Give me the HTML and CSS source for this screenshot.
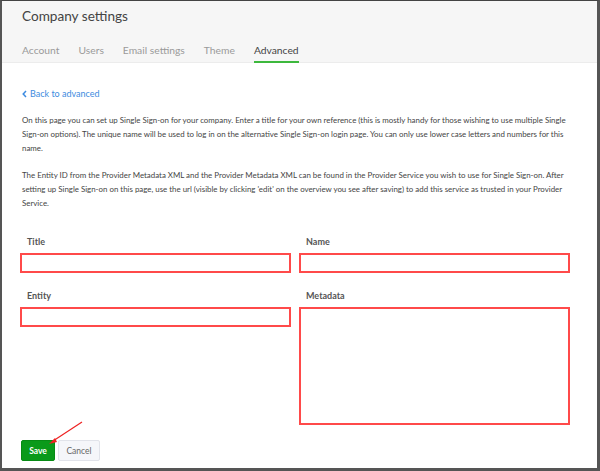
FILE: index.html
```html
<!DOCTYPE html>
<html>
<head>
<meta charset="utf-8">
<link rel="stylesheet" href="styles.css">
</head>
<body>
<div class="frame">
  <header class="header">
    <h1 class="title">Company settings</h1>
    <nav class="tabs">
      <span class="tab">Account</span>
      <span class="tab">Users</span>
      <span class="tab">Email settings</span>
      <span class="tab">Theme</span>
      <span class="tab active">Advanced</span>
    </nav>
  </header>
  <main class="content">
    <a class="back"><svg class="chev" width="5" height="8" viewBox="0 0 5 8"><path d="M4 1 L1.2 4 L4 7" fill="none" stroke="#3d8be0" stroke-width="1.5"/></svg>Back to advanced</a>
    <p class="text">On this page you can set up Single Sign-on for your company. Enter a title for your own reference (this is mostly handy for those wishing to use multiple Single Sign-on options). The unique name will be used to log in on the alternative Single Sign-on login page. You can only use lower case letters and numbers for this name.</p>
    <p class="text">The Entity ID from the Provider Metadata XML and the Provider Metadata XML can be found in the Provider Service you wish to use for Single Sign-on. After setting up Single Sign-on on this page, use the url (visible by clicking 'edit' on the overview you see after saving) to add this service as trusted in your Provider Service.</p>
    <div class="form">
      <div class="field">
        <label class="label">Title</label>
        <div class="input"></div>
      </div>
      <div class="field">
        <label class="label">Name</label>
        <div class="input"></div>
      </div>
      <div class="field">
        <label class="label">Entity</label>
        <div class="input"></div>
      </div>
      <div class="field">
        <label class="label">Metadata</label>
        <div class="input area"></div>
      </div>
    </div>
    <div class="actions">
      <button class="btn save">Save</button>
      <button class="btn cancel">Cancel</button>
      <svg class="arrow" width="40" height="30" viewBox="0 0 40 30"><line x1="37" y1="1" x2="8" y2="20" stroke="#ee2222" stroke-width="1.2"/><path d="M4 23 L10 17 L12 21 Z" fill="#ee2222"/></svg>
    </div>
  </main>
</div>
</body>
</html>
```
FILE: styles.css
```css
* { box-sizing: border-box; }
html, body { margin: 0; padding: 0; }
body {
  font-family: Lato, "Open Sans", sans-serif;
  color: #444;
  background: #fff;
}
.frame {
  width: 600px;
  height: 471px;
  border-top: 1px solid #444;
  border-left: 2px solid #555;
  border-right: 3px solid #555;
  border-bottom: 3px solid #555;
  position: relative;
  overflow: hidden;
}
.header {
  background: #f6f6f6;
  border-bottom: 1px solid #ececec;
  padding: 0 0 0 20px;
  height: 62px;
}
.title {
  margin: 0;
  font-weight: 400;
  font-size: 13.6px;
  line-height: 20px;
  padding-top: 5px;
  color: #444;
}
.tabs {
  display: flex;
  margin-top: 17px;
}
.tab {
  font-size: 10.3px;
  color: #9a9a9a;
  line-height: 14px;
  padding-bottom: 4px;
  margin-right: 19px;
  border-bottom: 2px solid transparent;
}
.tab.active {
  color: #444;
  border-bottom-color: #3db83d;
}
.content {
  padding: 24px 0 0 20px;
  position: relative;
}
.back {
  display: flex;
  align-items: center;
  font-size: 9px;
  color: #3d8be0;
  line-height: 14px;
}
.chev { margin-right: 3px; }
.text {
  margin: 12px 0 0 0;
  font-size: 7.9px;
  line-height: 14px;
  color: #444;
  width: 556px;
}
.text + .text { margin-top: 13px; }
.form {
  display: grid;
  grid-template-columns: 271px 271px;
  column-gap: 8px;
  row-gap: 16px;
  margin: 25px 0 0 -2px;
  width: 550px;
}
.label {
  display: block;
  font-size: 9px;
  font-weight: 700;
  color: #555;
  padding-left: 7px;
  line-height: 13px;
  margin-bottom: 5px;
}
.input {
  height: 20px;
  border: 2px solid #ff4a4a;
  background: #fff;
}
.input.area { height: 118px; }
.actions {
  display: flex;
  gap: 3px;
  margin: 15px 0 0 -1px;
  position: relative;
}
.btn {
  font-family: Lato, "Open Sans", sans-serif;
  font-size: 8.5px;
  height: 21px;
  border-radius: 2px;
  padding: 0;
}
.save {
  width: 34px;
  background: #0a9a1a;
  color: #fff;
  border: 1px solid #078a14;
  font-weight: 700;
}
.cancel {
  width: 42px;
  background: #f5f6fa;
  color: #666;
  border: 1px solid #e1e3ea;
}
.arrow {
  position: absolute;
  left: 24px;
  top: -19px;
}
```
